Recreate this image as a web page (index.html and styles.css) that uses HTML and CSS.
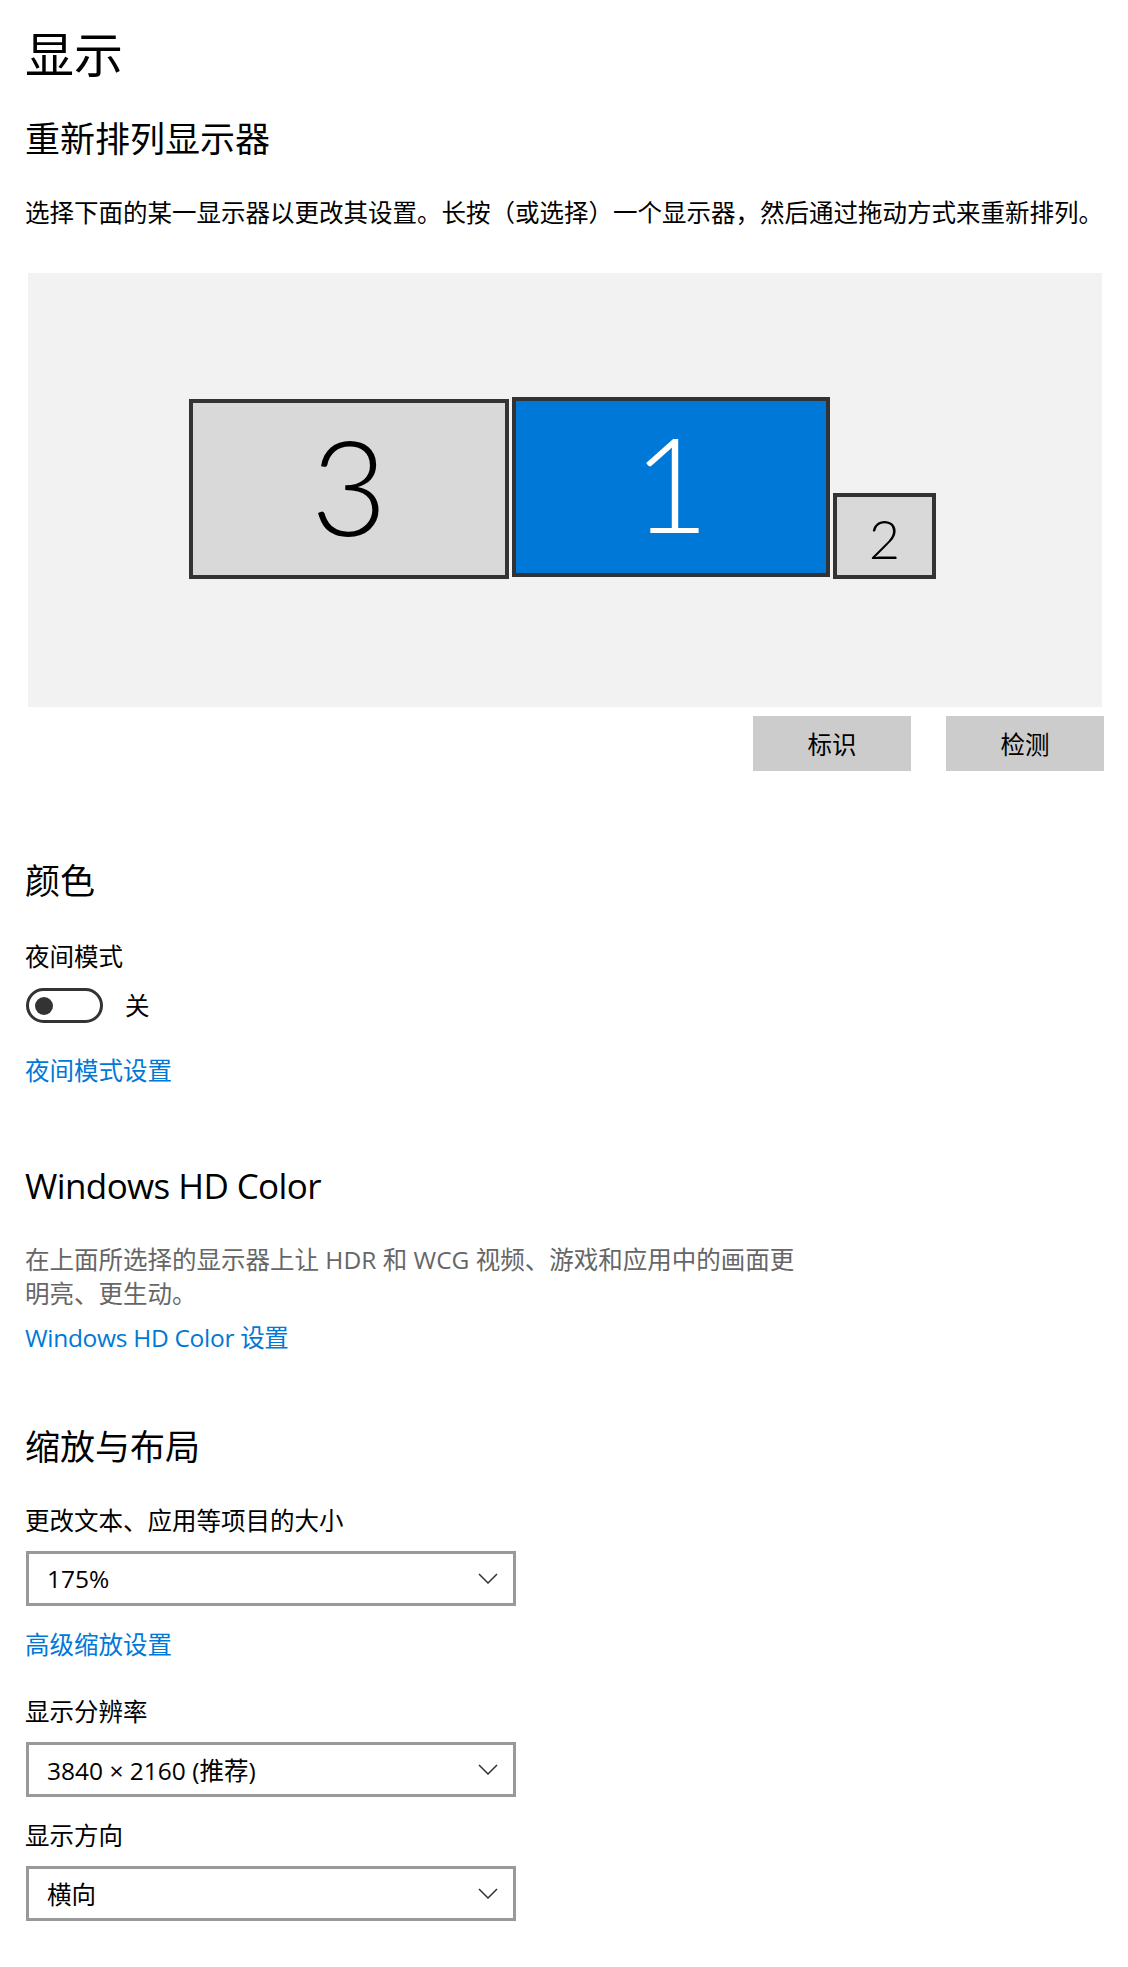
FILE: index.html
```html
<!DOCTYPE html>
<html lang="zh-CN">
<head>
    <meta charset="UTF-8">
    <meta name="viewport" content="width=device-width, initial-scale=1.0">
    <title>显示</title>
    <link rel="stylesheet" href="styles.css">
</head>
<body>
    <div class="page">
        <h1 class="page-title">显示</h1>

        <h2 class="section-title">重新排列显示器</h2>
        <p class="text arrange-hint">选择下面的某一显示器以更改其设置。长按（或选择）一个显示器，然后通过拖动方式来重新排列。</p>

        <div class="arrange">
            <div class="monitor monitor-3"><span>3</span></div>
            <div class="monitor monitor-1 selected"><span>1</span></div>
            <div class="monitor monitor-2"><span>2</span></div>
        </div>
        <div class="arrange-buttons">
            <button class="btn">标识</button>
            <button class="btn">检测</button>
        </div>

        <h2 class="section-title color-title">颜色</h2>
        <p class="text label night-label">夜间模式</p>
        <div class="toggle-row">
            <span class="toggle"><span class="knob"></span></span>
            <span class="text toggle-state">关</span>
        </div>
        <a class="link night-link" href="#">夜间模式设置</a>

        <h2 class="section-title hd-title">Windows HD Color</h2>
        <p class="text muted hd-desc">在上面所选择的显示器上让 HDR 和 WCG 视频、游戏和应用中的画面更明亮、更生动。</p>
        <a class="link hd-link" href="#">Windows HD Color 设置</a>

        <h2 class="section-title scale-title">缩放与布局</h2>
        <p class="text label scale-label">更改文本、应用等项目的大小</p>
        <div class="select">
            <span>175%</span>
            <svg class="chevron" viewBox="0 0 20 11" width="20" height="11"><polyline points="1,1 10,10 19,1" /></svg>
        </div>
        <a class="link adv-link" href="#">高级缩放设置</a>

        <p class="text label res-label">显示分辨率</p>
        <div class="select">
            <span>3840 × 2160 (推荐)</span>
            <svg class="chevron" viewBox="0 0 20 11" width="20" height="11"><polyline points="1,1 10,10 19,1" /></svg>
        </div>

        <p class="text label orient-label">显示方向</p>
        <div class="select">
            <span>横向</span>
            <svg class="chevron" viewBox="0 0 20 11" width="20" height="11"><polyline points="1,1 10,10 19,1" /></svg>
        </div>
    </div>
</body>
</html>
```

FILE: styles.css
```css
* {
    margin: 0;
    padding: 0;
    box-sizing: border-box;
}

body {
    font-family: "Open Sans", "Noto Sans CJK SC", sans-serif;
    background-color: #fff;
    color: #000;
}

.page {
    padding: 24px 20px 40px 25px;
}

.page-title {
    font-size: 49px;
    font-weight: normal;
    line-height: 60px;
}

.section-title {
    font-size: 35px;
    font-weight: normal;
    line-height: 44px;
    margin-top: 33px;
}

.text {
    font-size: 24.5px;
    line-height: 36px;
}

.muted {
    color: #666;
}

.arrange-hint {
    margin-top: 34px;
    white-space: nowrap;
}

/* monitor arrangement canvas */
.arrange {
    position: relative;
    height: 434px;
    margin: 42px 6px 0 3px;
    background-color: #f2f2f2;
}

.monitor {
    position: absolute;
    display: flex;
    justify-content: center;
    align-items: center;
    background-color: #d9d9d9;
    border: 4px solid #333;
    font-family: Lato, "Open Sans", sans-serif;
    font-weight: 300;
    color: #000;
}

.monitor-3 {
    left: 161px;
    top: 126px;
    width: 320px;
    height: 180px;
    font-size: 132px;
    padding-bottom: 8px;
}

.monitor-1 {
    left: 484px;
    top: 124px;
    width: 318px;
    height: 180px;
    font-size: 132px;
    padding-bottom: 10px;
}

.monitor-2 {
    left: 805px;
    top: 220px;
    width: 103px;
    height: 86px;
    font-size: 54px;
    padding-top: 6px;
}

.monitor.selected {
    background-color: #0078d7;
    color: #fff;
}

.monitor span {
    line-height: 1;
}

.arrange-buttons {
    display: flex;
    justify-content: flex-end;
    gap: 35px;
    margin: 9px 4px 0 0;
}

.btn {
    width: 158px;
    height: 55px;
    border: none;
    background-color: #ccc;
    font-family: "Open Sans", "Noto Sans CJK SC", sans-serif;
    font-size: 24.5px;
    color: #000;
}

.color-title {
    margin-top: 88px;
}

.night-label {
    margin-top: 36px;
}

.toggle-row {
    display: flex;
    align-items: center;
    gap: 22px;
    margin-top: 13px;
    padding-left: 1px;
}

.toggle {
    display: flex;
    align-items: center;
    width: 77px;
    height: 35px;
    border: 3px solid #333;
    border-radius: 18px;
    padding-left: 6px;
}

.knob {
    width: 18px;
    height: 18px;
    border-radius: 50%;
    background-color: #333;
}

.toggle-state {
    line-height: 35px;
}

.link {
    display: block;
    width: max-content;
    font-size: 24.5px;
    line-height: 36px;
    color: #0078d7;
    text-decoration: none;
}

.night-link {
    margin-top: 30px;
}

.hd-title {
    margin-top: 75px;
    letter-spacing: -0.6px;
}

.hd-desc {
    max-width: 790px;
    line-height: 34px;
    margin-top: 35px;
}

.hd-link {
    margin-top: 9px;
    letter-spacing: -0.3px;
}

.scale-title {
    margin-top: 69px;
}

.scale-label {
    margin-top: 34px;
}

.select {
    display: flex;
    justify-content: space-between;
    align-items: center;
    width: 490px;
    height: 55px;
    margin: 12px 0 0 1px;
    padding: 0 15px 0 18px;
    border: 3px solid #999;
    font-size: 24.5px;
}

.chevron {
    fill: none;
    stroke: #333;
    stroke-width: 1.5;
}

.adv-link {
    margin-top: 21px;
}

.res-label {
    margin-top: 31px;
}

.orient-label {
    margin-top: 21px;
}
```
